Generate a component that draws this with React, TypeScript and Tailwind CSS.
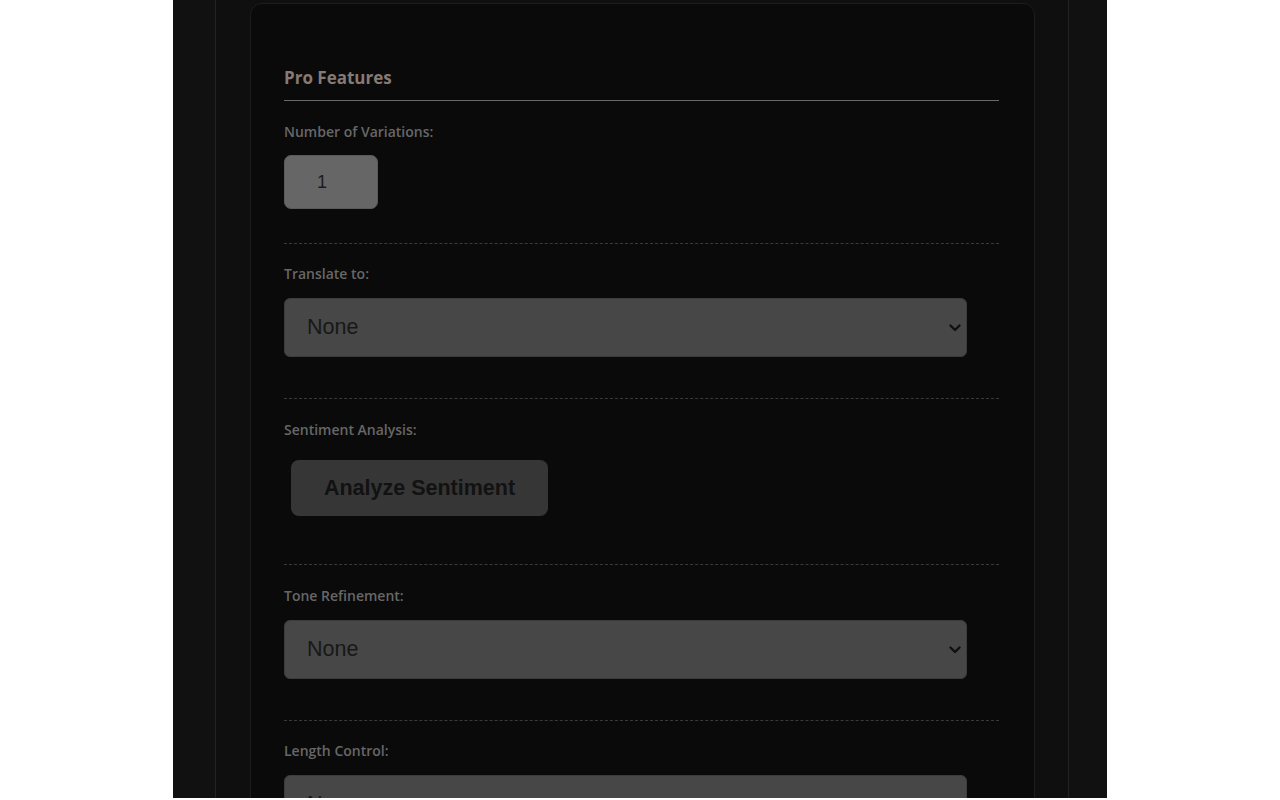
import React from "react";

const Chevron = () => (
  <svg width="12" height="8" viewBox="0 0 12 8" className="absolute right-[5px] top-1/2 -translate-y-1/2">
    <path d="M1.5 1.5 L6 6 L10.5 1.5" fill="none" stroke="#111" strokeWidth="2.4" strokeLinecap="round" strokeLinejoin="round" />
  </svg>
);

const SelectBox = ({ text }: { text: string }) => (
  <div className="relative w-[683px] h-[59px] rounded-[6px] bg-[#474747] border border-[#3c3c3c] flex items-center pl-[22px] text-[21.5px] text-[#181818]" style={{ fontFamily: '"Liberation Sans", Arial, sans-serif' }}>
    {text}
    <Chevron />
  </div>
);

const Label = ({ children, mb = "mb-[15px]" }: { children: React.ReactNode; mb?: string }) => (
  <div className={`text-[14px] leading-[18px] font-semibold text-[#676767] ${mb}`}>{children}</div>
);

export default function App() {
  return (
    <div className="w-[1280px] h-[800px] bg-white overflow-hidden" style={{ fontFamily: '"Open Sans", "Noto Sans", sans-serif' }}>
      <div className="ml-[173px] w-[934px] h-[798px] bg-[#111111] flex overflow-hidden">
        <div className="ml-[42px] w-[854px] h-full border-x border-[#232323] bg-[#0f0f0f] overflow-hidden">
          <div className="ml-[34px] mt-[3px] w-[785px] h-[900px] rounded-[12px] border border-[#1d1d1d] bg-[#0a0a0a] pl-[33px] pr-[35px] pt-[63px]">
            <div className="text-[17px] leading-[22px] font-bold text-[#857a74] pb-[11px] border-b border-[#6a6a6a]">Pro Features</div>
            <div className="pt-[22px] pb-[34px]">
              <Label mb="mb-[14px]">Number of Variations:</Label>
              <div className="w-[94px] h-[54px] rounded-[7px] bg-[#666666] border border-[#5a5a5a] flex items-center pl-[32px] text-[18px] text-[#1c1c1c]" style={{ fontFamily: '"Liberation Sans", Arial, sans-serif' }}>1</div>
            </div>
            <div className="border-t border-dashed border-[#3a3a3a] pt-[21px] pb-[41px]">
              <Label>Translate to:</Label>
              <SelectBox text="None" />
            </div>
            <div className="border-t border-dashed border-[#3a3a3a] pt-[22px] pb-[48px]">
              <Label mb="mb-[21px]">Sentiment Analysis:</Label>
              <div className="ml-[7px] w-[257px] h-[56px] rounded-[8px] bg-[#363636] flex items-center justify-center text-[21.5px] font-bold text-[#121212]" style={{ fontFamily: '"Liberation Sans", Arial, sans-serif' }}>Analyze Sentiment</div>
            </div>
            <div className="border-t border-dashed border-[#3a3a3a] pt-[22px] pb-[41px]">
              <Label>Tone Refinement:</Label>
              <SelectBox text="None" />
            </div>
            <div className="border-t border-dashed border-[#3a3a3a] pt-[21px]">
              <Label>Length Control:</Label>
              <SelectBox text="None" />
            </div>
          </div>
        </div>
      </div>
    </div>
  );
}
